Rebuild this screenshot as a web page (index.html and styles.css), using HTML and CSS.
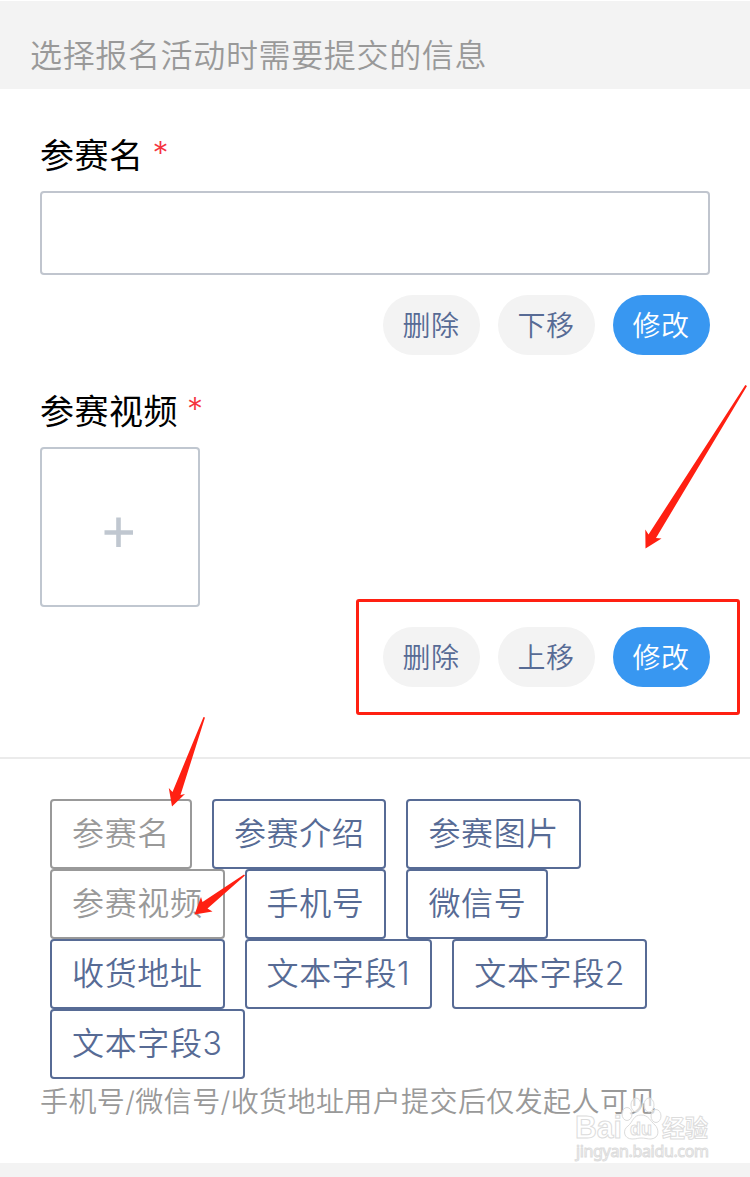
FILE: index.html
```
<!DOCTYPE html>
<html lang="zh-CN">
<head>
    <meta charset="UTF-8">
    <meta name="viewport" content="width=device-width, initial-scale=1.0">
    <title>报名信息</title>
    <link rel="stylesheet" href="styles.css">
</head>
<body>
    <div class="page">
        <div class="tip">选择报名活动时需要提交的信息</div>

        <div class="fields">
            <div class="field">
                <div class="label">参赛名<span class="required">*</span></div>
                <div class="text-input"></div>
                <div class="actions">
                    <div class="btn">删除</div>
                    <div class="btn">下移</div>
                    <div class="btn primary">修改</div>
                </div>
            </div>
            <div class="field">
                <div class="label">参赛视频<span class="required">*</span></div>
                <div class="upload">
                    <svg width="30" height="30" viewBox="0 0 30 30"><path d="M0.5 15.5H29M14.5 0.5V30" stroke="#c0c7d0" stroke-width="4.6"/></svg>
                </div>
                <div class="actions">
                    <div class="btn">删除</div>
                    <div class="btn">上移</div>
                    <div class="btn primary">修改</div>
                </div>
            </div>
        </div>

        <div class="options">
            <div class="tags">
                <div class="tag used">参赛名</div>
                <div class="tag">参赛介绍</div>
                <div class="tag">参赛图片</div>
                <div class="tag used">参赛视频</div>
                <div class="tag">手机号</div>
                <div class="tag">微信号</div>
                <div class="tag">收货地址</div>
                <div class="tag">文本字段1</div>
                <div class="tag">文本字段2</div>
                <div class="tag">文本字段3</div>
            </div>
            <div class="hint">手机号/微信号/收货地址用户提交后仅发起人可见</div>
        </div>

        <!-- red arrows and box -->
        <svg class="marks" width="750" height="1177" viewBox="0 0 750 1177">
            <rect x="357.5" y="600.5" width="381" height="113" rx="1.5" fill="none" stroke="#ff2012" stroke-width="3"/>
            <g fill="#ff2012">
                <path d="M745.3 385L747 386L656 538L661.5 538.5L645.5 548.5L645.3 529.5L648.5 534.5Z"/>
                <path d="M203.5 717L205 717.5L180.5 795L185 794L172 806.5L168.8 788L172.5 792Z"/>
                <path d="M244 874.5L245 875.5L207.5 908.5L212.5 911.5L194.5 914.5L201 897L202.5 902Z"/>
            </g>
        </svg>

        <!-- watermark -->
        <svg class="watermark" width="150" height="68" viewBox="0 0 150 68">
            <g fill="#fff" stroke="#dcdcdc" stroke-width="1">
                <text class="wm-logo" x="4" y="42" textLength="47" lengthAdjust="spacingAndGlyphs">Bai</text>
                <g fill-opacity="0.6">
                    <ellipse cx="56" cy="18" rx="5" ry="6.5"/>
                    <ellipse cx="65" cy="9" rx="5" ry="7"/>
                    <ellipse cx="78" cy="9" rx="5" ry="7"/>
                    <ellipse cx="85" cy="20" rx="5" ry="6.5"/>
                </g>
                <path d="M70 19C62 19 62 26 57 30C51 34 53 43 61 43C66 43 67 42 70 42C74 42 76 43 80 43C89 42 88 33 84 29C79 25 78 19 70 19Z"/>
                <text class="wm-du" x="59" y="39" textLength="22" lengthAdjust="spacingAndGlyphs">du</text>
                <text class="wm-cn" x="91" y="41" textLength="46" lengthAdjust="spacingAndGlyphs">经验</text>
                <text class="wm-url" x="5" y="61" textLength="133">jingyan.baidu.com</text>
            </g>
        </svg>
    </div>
</body>
</html>
```
FILE: styles.css
```
* {
    box-sizing: border-box;
}

body {
    margin: 0;
    background-color: #ffffff;
    font-family: Inter, "Noto Sans CJK SC", sans-serif;
}

.page {
    position: relative;
    width: 750px;
    height: 1177px;
    overflow: hidden;
    border-top: 1px solid #ffffff;
    border-bottom: 14px solid #f3f3f3;
}

.tip {
    height: 88px;
    padding: 22px 30px 0;
    background-color: #f3f3f3;
    color: #999999;
    font-size: 32px;
    line-height: 66px;
    letter-spacing: 0.65px;
    font-weight: 350;
}

.fields {
    height: 670px;
    padding: 36px 40px 0;
    border-bottom: 2px solid #ebebeb;
}

.field {
    margin-bottom: 26px;
}

.label {
    height: 66px;
    line-height: 62px;
    font-size: 34px;
    letter-spacing: 0.5px;
    color: #000000;
}

.required {
    margin-left: 9px;
    color: #f5333f;
    font-size: 32px;
    font-weight: 350;
    line-height: 1;
    vertical-align: 3px;
}

.text-input {
    height: 84px;
    border: 2px solid #c0c5ce;
    border-radius: 4px;
}

.upload {
    display: flex;
    align-items: center;
    justify-content: center;
    width: 160px;
    height: 160px;
    padding: 10px 2px 0 0;
    border: 2px solid #c0c7d0;
    border-radius: 4px;
}

.actions {
    display: flex;
    justify-content: flex-end;
    gap: 18px;
    margin-top: 20px;
}

.btn {
    width: 97px;
    height: 60px;
    padding: 1px 1px 0 0;
    border-radius: 30px;
    background-color: #f3f3f3;
    color: #576b95;
    font-size: 28px;
    line-height: 60px;
    letter-spacing: 0.4px;
    text-align: center;
    font-weight: 350;
}

.primary {
    background-color: #3897f1;
    color: #ffffff;
}

.options {
    padding: 40px 40px 0;
}

.tags {
    display: flex;
    flex-wrap: wrap;
    column-gap: 20px;
    padding-left: 10px;
}

.tag {
    height: 70px;
    padding: 0 20px;
    border: 2px solid #576b95;
    border-radius: 4px;
    color: #576b95;
    font-size: 32px;
    line-height: 66px;
    letter-spacing: 0.63px;
    font-weight: 350;
}

.used {
    border-color: #999999;
    color: #999999;
}

.hint {
    padding-top: 1px;
    line-height: 44px;
    color: #999999;
    font-size: 28px;
    letter-spacing: 0.4px;
    white-space: nowrap;
    font-weight: 350;
}

.marks {
    position: absolute;
    top: -1px;
    left: 0;
}

.watermark {
    position: absolute;
    left: 571px;
    top: 1095px;
}

.wm-logo {
    font: bold 31px "Liberation Sans", sans-serif;
}

.wm-du {
    font: bold 19px "Liberation Sans", sans-serif;
}

.wm-cn {
    font: bold 24px "Noto Sans CJK SC", sans-serif;
}

.wm-url {
    font: 16px "Noto Sans", sans-serif;
}
```
